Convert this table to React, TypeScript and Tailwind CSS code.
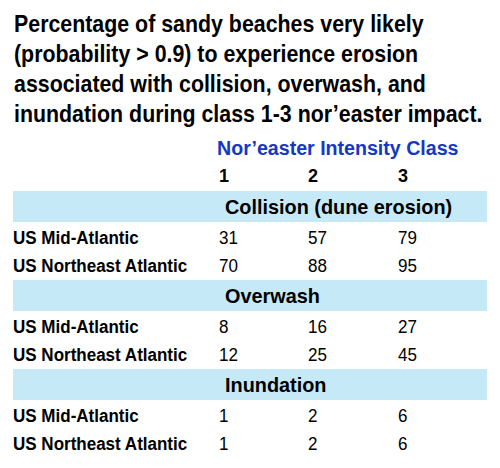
const sections = [
  {
    title: "Collision (dune erosion)",
    rows: [
      { region: "US Mid-Atlantic", values: [31, 57, 79] },
      { region: "US Northeast Atlantic", values: [70, 88, 95] },
    ],
  },
  {
    title: "Overwash",
    rows: [
      { region: "US Mid-Atlantic", values: [8, 16, 27] },
      { region: "US Northeast Atlantic", values: [12, 25, 45] },
    ],
  },
  {
    title: "Inundation",
    rows: [
      { region: "US Mid-Atlantic", values: [1, 2, 6] },
      { region: "US Northeast Atlantic", values: [1, 2, 6] },
    ],
  },
];

// pas de police "narrow" installée, on resserre le texte horizontalement
const Narrow = ({ children }: { children: React.ReactNode }) => (
  <span className="inline-block origin-left scale-x-[0.945] whitespace-nowrap">
    {children}
  </span>
);

const App = () => {
  return (
    <div className="w-[500px] h-[468px] bg-white text-black font-['Liberation_Sans',Arial,sans-serif] overflow-hidden">
      {/* titre */}
      <div className="pl-[14px] pt-[9px] text-[24px] leading-[30px] font-bold whitespace-nowrap">
        {[
          "Percentage of sandy beaches very likely",
          "(probability > 0.9) to experience erosion",
          "associated with collision, overwash, and",
          "inundation during class 1-3 nor’easter impact.",
        ].map((line) => (
          <div key={line}>
            <span className="inline-block origin-left scale-x-[0.89]">{line}</span>
          </div>
        ))}
      </div>

      <div className="mt-[7px] pl-[217px] text-[20px] leading-[24px] font-bold text-[#1538c4]">
        <span className="inline-block origin-left scale-x-[0.98] whitespace-nowrap">
          Nor’easter Intensity Class
        </span>
      </div>

      <div className="mt-[5px] grid grid-cols-[206px_89px_90px_1fr] pl-[13px] text-[18px] leading-[22px] font-bold">
        <div />
        <div>1</div>
        <div>2</div>
        <div>3</div>
      </div>

      <div className="mt-[4px] mx-[13px]">
        {sections.map((s) => (
          <div key={s.title}>
            <div className="h-[31px] bg-[#c6e9f8] pl-[212px] text-[21px] leading-[31px] font-bold">
              <Narrow>{s.title}</Narrow>
            </div>
            <div className="pt-[2px]">
              {s.rows.map((r) => (
                <div
                  key={r.region}
                  className="grid grid-cols-[206px_89px_90px_1fr] h-[28px] text-[18px] leading-[28px]"
                >
                  <div className="font-bold">
                    <Narrow>{r.region}</Narrow>
                  </div>
                  {r.values.map((v, j) => (
                    <div key={j}>
                      <Narrow>{v}</Narrow>
                    </div>
                  ))}
                </div>
              ))}
            </div>
          </div>
        ))}
      </div>
    </div>
  );
};

export default App;
